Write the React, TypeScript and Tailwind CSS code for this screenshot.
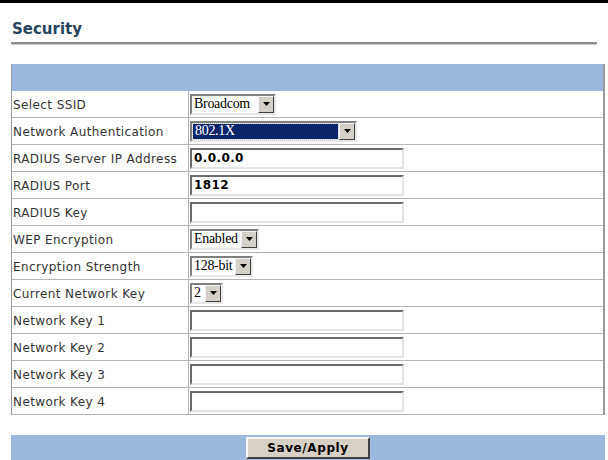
import React from 'react'

// Classic Windows-style dropdown (sunken box + grey arrow button)
function Dropdown({ value, width, selected = false }: { value: string; width: number; selected?: boolean }) {
  return (
    <div
      className="flex h-[21px] items-stretch border-2 border-t-[#808080] border-l-[#808080] border-b-[#e8e8e8] border-r-[#e8e8e8] bg-white"
      style={{ width }}
    >
      <div className="flex flex-1 items-center overflow-hidden p-px">
        <div
          className={
            selected
              ? 'flex h-full flex-1 items-center bg-[#0a246a] px-[2px] text-white outline-1 outline-dotted outline-[#c0c0c0]'
              : 'flex h-full flex-1 items-center px-[1px] text-black'
          }
        >
          <span className="whitespace-nowrap font-['Liberation_Serif',serif] text-[14px] leading-none tracking-[-0.3px]">
            {value}
          </span>
        </div>
      </div>
      <div className="flex w-[16px] shrink-0 items-center justify-center border border-t-[#f4f4f4] border-l-[#f4f4f4] border-b-[#404040] border-r-[#404040] bg-[#d4d0c8]">
        <svg width="7" height="4" viewBox="0 0 7 4">
          <path d="M0 0h7L3.5 4z" fill="#000" />
        </svg>
      </div>
    </div>
  )
}

function TextBox({ value = '' }: { value?: string }) {
  return (
    <div className="flex h-[21px] w-[214px] items-center border-2 border-t-[#6b6b6b] border-l-[#6b6b6b] border-b-[#e4e4e4] border-r-[#e4e4e4] bg-white px-[2px]">
      <span className="text-[12px] font-bold leading-none tracking-[0.4px] text-black">{value}</span>
    </div>
  )
}

const rows: { label: string; field: React.ReactNode }[] = [
  { label: 'Select SSID', field: <Dropdown value="Broadcom" width={86} /> },
  { label: 'Network Authentication', field: <Dropdown value="802.1X" width={167} selected /> },
  { label: 'RADIUS Server IP Address', field: <TextBox value="0.0.0.0" /> },
  { label: 'RADIUS Port', field: <TextBox value="1812" /> },
  { label: 'RADIUS Key', field: <TextBox /> },
  { label: 'WEP Encryption', field: <Dropdown value="Enabled" width={69} /> },
  { label: 'Encryption Strength', field: <Dropdown value="128-bit" width={63} /> },
  { label: 'Current Network Key', field: <Dropdown value="2" width={33} /> },
  { label: 'Network Key 1', field: <TextBox /> },
  { label: 'Network Key 2', field: <TextBox /> },
  { label: 'Network Key 3', field: <TextBox /> },
  { label: 'Network Key 4', field: <TextBox /> },
]

export default function App() {
  return (
    <div className="h-[460px] w-[608px] overflow-hidden bg-white font-['DejaVu_Sans',Verdana,sans-serif]">
      <div className="h-[3px] bg-black" />

      {/* page title */}
      <div className="px-[12px] pt-[16px] text-[15px] font-bold leading-[20px] text-[#27445f]">Security</div>
      <div className="mx-[11px] mt-[3px] h-[3px] border-t-2 border-[#8c8c8c] bg-[#d0d0d0]" />

      {/* settings table */}
      <div className="mx-[11px] mt-[19px] w-[594px] border-r-2 border-l border-[#9a9a9a]">
        <div className="h-[27px] bg-[#9bb9de]" />
        {rows.map((r) => (
          <div key={r.label} className="flex h-[27px] border-b border-[#b4b4b4]">
            <div className="flex w-[177px] items-center whitespace-nowrap border-r border-[#b4b4b4] pl-[1px] pt-[1px] text-[12px] tracking-[0.4px] text-[#333]">
              {r.label}
            </div>
            <div className="flex items-center pl-[1px]">{r.field}</div>
          </div>
        ))}
      </div>

      {/* action bar */}
      <div className="mx-[11px] mt-[20px] flex h-[30px] w-[594px] justify-center bg-[#9bb9de] pt-[2px]">
        <button className="h-[22px] w-[124px] border-2 border-t-[#f8f8f8] border-l-[#f8f8f8] border-b-[#404040] border-r-[#404040] bg-[#d6d0c6] text-[12px] font-bold tracking-[0.6px] text-black">
          Save/Apply
        </button>
      </div>
    </div>
  )
}
